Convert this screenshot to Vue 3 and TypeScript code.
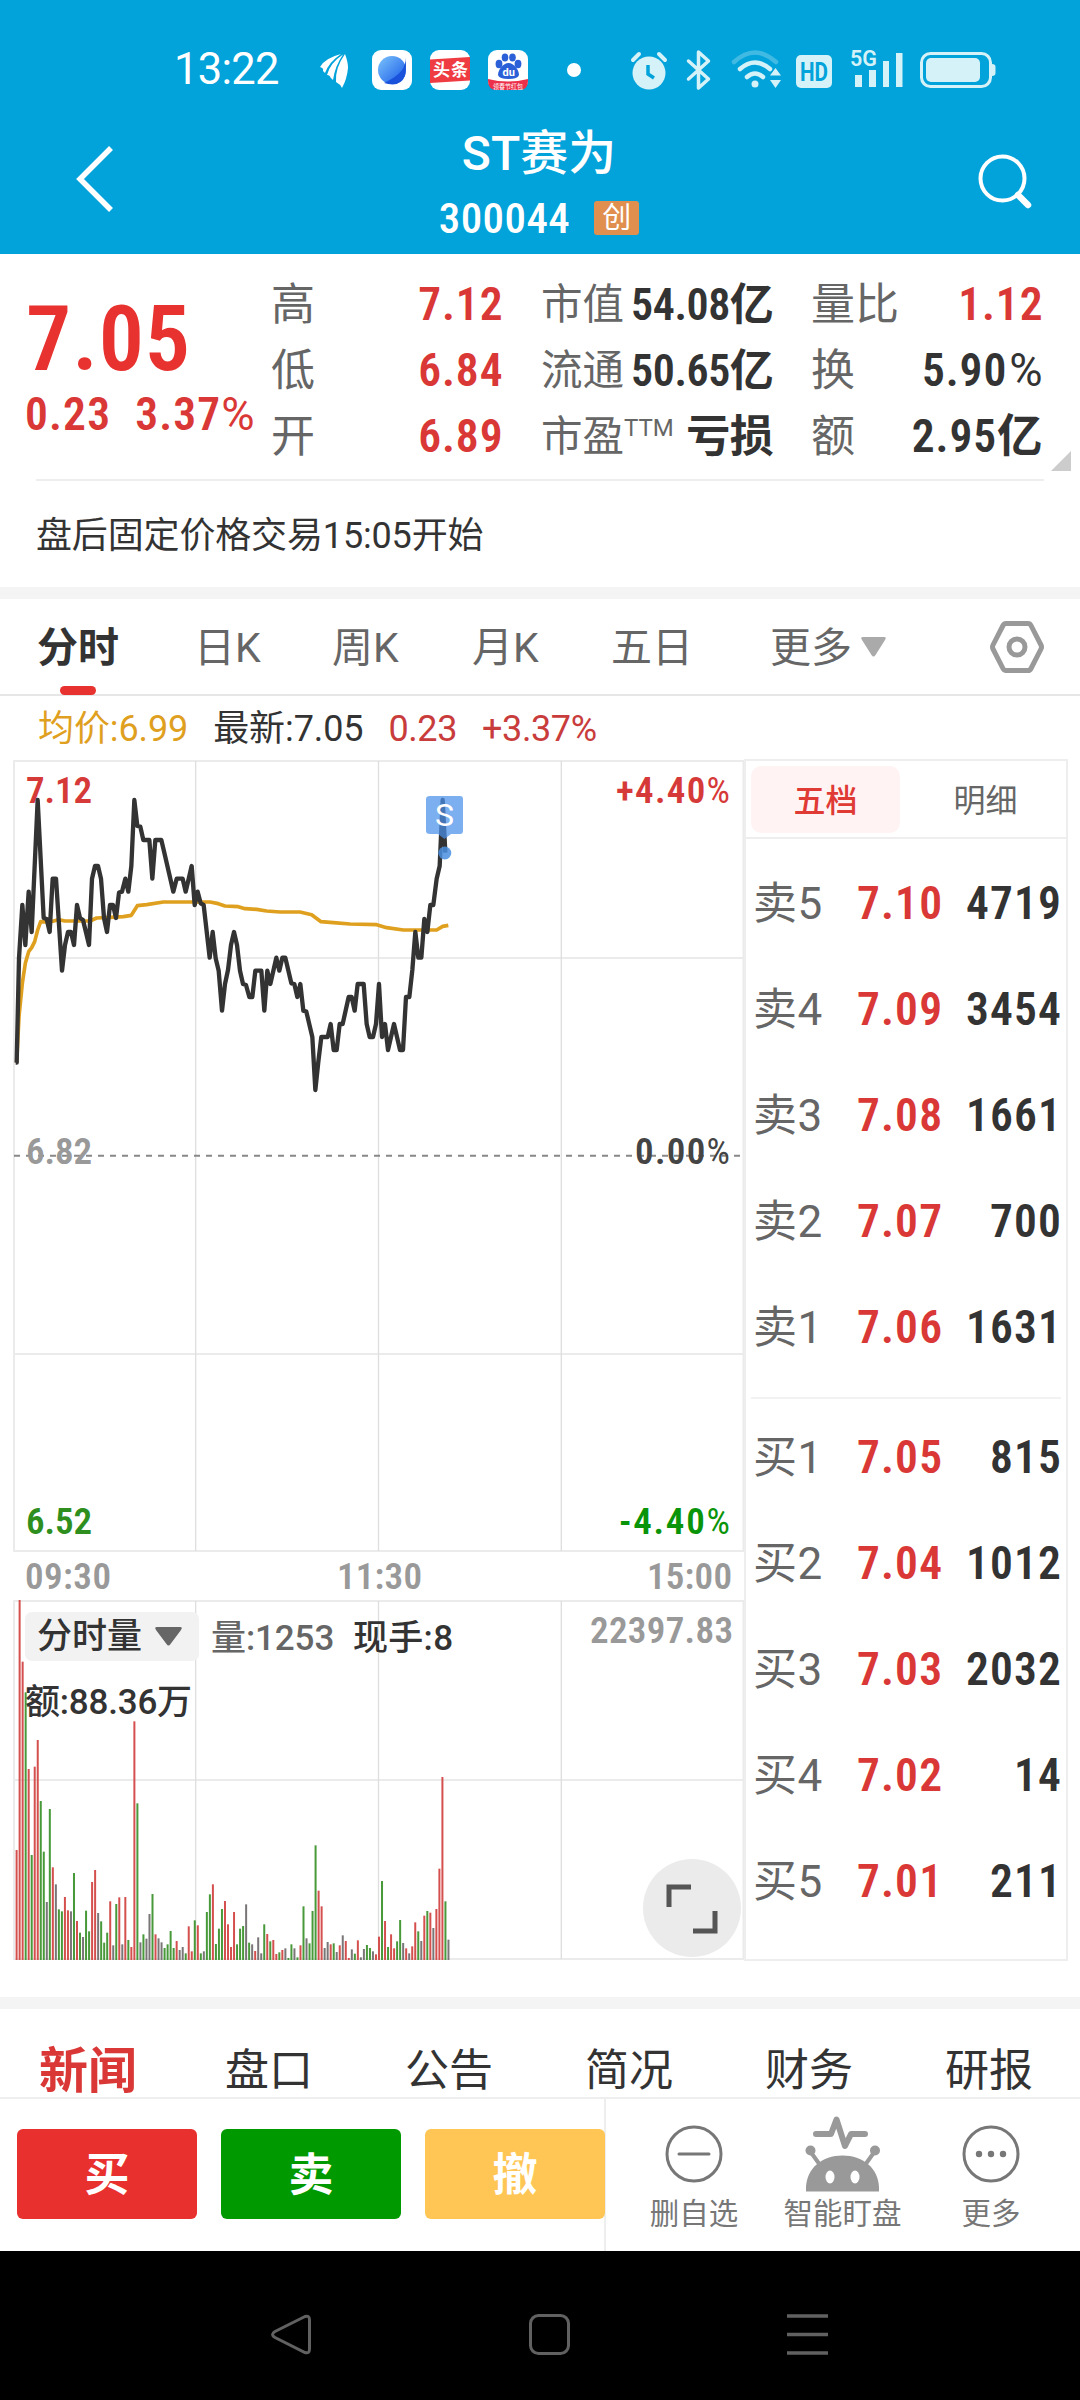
<script setup lang="ts">
interface Stat { label: string; sup?: string; value: string; red?: boolean; tight?: boolean }
interface Quote { name: string; price: string; volume: string }

const stats: Stat[][] = [
  [
    { label: '高', value: '7.12', red: true },
    { label: '低', value: '6.84', red: true },
    { label: '开', value: '6.89', red: true },
  ],
  [
    { label: '市值', value: '54.08亿', tight: true },
    { label: '流通', value: '50.65亿', tight: true },
    { label: '市盈', sup: 'TTM', value: '亏损', tight: true },
  ],
  [
    { label: '量比', value: '1.12', red: true },
    { label: '换', value: '5.90%' },
    { label: '额', value: '2.95亿' },
  ],
]

const periods = [
  { t: '分时', w: 80, ml: 37 }, { t: '日K', w: 62, ml: 77 }, { t: '周K', w: 66, ml: 76 },
  { t: '月K', w: 66, ml: 74 }, { t: '五日', w: 80, ml: 73 }, { t: '更多', w: 80, ml: 79 },
]

const sells: Quote[] = [
  { name: '卖5', price: '7.10', volume: '4719' },
  { name: '卖4', price: '7.09', volume: '3454' },
  { name: '卖3', price: '7.08', volume: '1661' },
  { name: '卖2', price: '7.07', volume: '700' },
  { name: '卖1', price: '7.06', volume: '1631' },
]
const buys: Quote[] = [
  { name: '买1', price: '7.05', volume: '815' },
  { name: '买2', price: '7.04', volume: '1012' },
  { name: '买3', price: '7.03', volume: '2032' },
  { name: '买4', price: '7.02', volume: '14' },
  { name: '买5', price: '7.01', volume: '211' },
]

const pages = ['新闻', '盘口', '公告', '简况', '财务', '研报']

// Minute price line and average line, in thirds of a pixel
const priceLine =
  '47,938 50,938 57,625 67,465 76,585 86,425 95,546 113,150 131,504 140,507 149,546 158,386 168,386 186,662 195,585 204,546 213,546 222,585 231,465 240,504 249,510 267,585 276,386 285,348 294,348 303,386 312,504 321,546 330,465 339,465 348,504 357,428 366,425 376,386 385,425 394,348 403,150 412,228 421,230 430,270 448,270 457,386 466,270 484,270 493,308 520,425 530,386 548,386 557,425 575,348 584,465 593,425 602,460 611,465 629,623 638,546 647,625 656,662 666,782 675,702 684,660 693,585 702,546 711,585 720,662 729,702 738,705 748,741 757,741 766,662 784,662 793,782 802,662 811,702 829,623 838,662 847,623 856,623 874,700 883,702 892,741 901,702 910,782 919,785 937,861 946,1020 955,935 964,861 983,861 992,822 1001,900 1010,900 1019,822 1028,822 1046,741 1055,741 1064,782 1073,702 1091,702 1100,822 1109,861 1119,861 1128,822 1137,702 1146,861 1155,822 1164,900 1182,822 1200,900 1209,900 1218,741 1228,741 1237,660 1246,546 1255,623 1264,623 1273,507 1282,546 1291,465 1300,465 1310,386 1319,348 1328,150 1336,308'
const averageLine =
  '50,938 57,800 67,700 76,640 86,605 95,593 104,575 113,540 122,515 150,516 175,509 195,513 270,513 290,504 330,502 370,500 394,496 412,467 440,464 490,456 580,456 630,456 655,461 675,468 715,470 735,476 770,478 800,483 840,486 900,486 935,494 963,515 1000,518 1050,522 1130,524 1160,533 1210,540 1310,540 1328,529 1345,526'

const rawBars =
  '780r 30r 215r 307g 537r 795g 530r 450r 633g 785g 936k 657g 832r 883k 958g 964g 921r 961r 964k 849g 993r 1028g 1041k 962g 1024g 876r 840r 969k 994g 1058g 1028g 934r 1066k 942g 922r 1063k 921r 1050g 1071r 394r 640g 1057k 1033g 1046k 972k 912g 1033r 1045k 1057k 1074g 1063g 1023g 1074g 1053r 1080k 1071k 1090g 1009r 1084r 991g 1006r 1090g 1084k 966g 913g 883r 1062g 1016g 957g 933r 1003r 1071r 966r 1063g 1016g 1008g 943k 1058g 1063k 1083r 1042k 1090k 1003g 1032r 1054g 1050r 1092r 1087g 1080r 1075k 1104g 1063g 1075k 1102g 1066r 949g 1045k 1060g 963g 766g 902r 949r 1074k 1056k 1063r 1060g 1086k 1066r 1036k 1053r 1104r 1078k 1091g 1051r 1102k 1077k 1065g 1074g 1084k 1093r 1040r 873g 993r 1071g 1033r 1075r 1054g 990g 1059k 1075r 1090k 1069r 997r 1024g 1053k 977r 963g 968r 1014k 957r 836r 561r 934g 1049k'
const tones: Record<string, string> = { r: '#d4504e', g: '#48993a', k: '#7a7678' }
const bars = rawBars.split(' ').map((s, i) => {
  const top = 1590 + parseInt(s, 10) / 3
  return { x: 15.6 + i * 3.02, y: top, h: 1960 - top, fill: tones[s.slice(-1)] }
})
</script>

<template>
  <div class="app">
    <header class="top">
      <div class="status">
        <span class="clock">13:22</span>
        <svg class="status-icons" width="690" height="50" viewBox="310 45 690 50">
          <g fill="#fff">
            <path d="M320 67Q325 58 341 54Q329 62 325 73L323 71Q324 68 320 67Z" />
            <path d="M327 75Q330 63 343 54.500Q335 66 333 80L330.500 77.500Q330 75 327 75Z" />
            <path d="M336 82Q335 68 345 54Q348 62 348 68Q347 79 342 88Q340 84 336 82Z" />
          </g>
          <defs>
            <linearGradient id="orb" x1="0" y1="0" x2="1" y2="1">
              <stop offset="0" stop-color="#7cc4fb" /><stop offset="1" stop-color="#1657e8" />
            </linearGradient>
          </defs>
          <rect x="372" y="50" width="40" height="40" rx="9" fill="#fff" />
          <circle cx="392" cy="70" r="14" fill="url(#orb)" />
          <path d="M405 57Q408 72 384 83Q400 88 405 76Q407 66 405 57Z" fill="#1a52dc" />
          <rect x="430" y="50" width="40" height="40" rx="9" fill="#fff" />
          <path d="M430 59.500L470 57V80.500L430 83Z" fill="#ef3b42" />
          <text x="433" y="76" font-size="17" font-weight="700" fill="#fff" textLength="35">头条</text>
          <rect x="488" y="50" width="40" height="40" rx="9" fill="#fff" />
          <g fill="#2a5fd8">
            <ellipse cx="499" cy="64" rx="3.400" ry="4.200" /><ellipse cx="505" cy="57.500" rx="3.300" ry="4" />
            <ellipse cx="512.500" cy="57.500" rx="3.300" ry="4" /><ellipse cx="518" cy="64" rx="3.400" ry="4.200" />
            <path d="M508.500 63C503 63 498 70 498 75Q499 79 508.500 79Q518 79 519 75C519 70 514 63 508.500 63Z" />
          </g>
          <path d="M488 79Q508 84 528 79V81Q528 90 519 90H497Q488 90 488 81Z" fill="#ec3049" />
          <text x="502.500" y="76" font-size="11" font-weight="700" fill="#fff">du</text>
          <text x="493" y="88.500" font-size="7" fill="#fff" textLength="30" lengthAdjust="spacingAndGlyphs">领春节红包</text>
          <circle cx="574" cy="70" r="7" fill="#fff" />

          <g fill="#d5f2f8">
            <circle cx="649" cy="73" r="16.500" />
            <path d="M633 60L639 54M665 60L659 54" stroke="#d5f2f8" stroke-width="4" stroke-linecap="round" />
            <path d="M648 65V74L654 78" fill="none" stroke="#02a2da" stroke-width="3.500" />
            <path d="M688.500 61L708.500 79L698.500 88V52L708.500 61L688.500 79" fill="none" stroke="#d5f2f8" stroke-width="3.500" stroke-linejoin="round" stroke-linecap="round" />
            <g fill="none" stroke="#d5f2f8" stroke-linecap="round" stroke-width="4.500">
              <path d="M734 62Q755 43 776 62" opacity=".3" /><path d="M740 69Q755 56 770 69" /><path d="M747 77Q755 70 763 77" />
            </g>
            <circle cx="755" cy="84" r="3.500" />
            <path d="M770 75.500L775.500 68L781 75.500ZM770 80L775.500 88L781 80Z" />
            <rect x="796" y="55" width="36" height="33" rx="5" />
            <text x="800" y="81" font-size="26" font-weight="700" fill="#02a2da" textLength="28" lengthAdjust="spacingAndGlyphs">HD</text>
            <text x="850" y="66" font-size="22" font-weight="600" textLength="27" lengthAdjust="spacingAndGlyphs">5G</text>
            <path d="M855 75h7v12h-7zM869 70h7v17h-7zM883 61h6v26h-6zM896 53h6.500v34h-6.500z" />
            <rect x="921.500" y="53.500" width="69" height="33" rx="9" fill="none" stroke="#d5f2f8" stroke-width="3" />
            <rect x="926" y="58" width="54" height="24" rx="5" />
            <path d="M992 64Q995.500 64 995.500 67V73Q995.500 76 992 76Z" />
          </g>
        </svg>
      </div>
      <div class="title-row">
        <svg width="50" height="76" viewBox="70 145 50 76" class="back">
          <path d="M111 150L80 181L111 212" fill="none" stroke="#fff" stroke-width="5.500" />
        </svg>
        <div class="titles">
          <h1>ST赛为</h1>
          <div class="code"><span class="code-num">300044</span><span class="badge">创</span></div>
        </div>
        <svg width="60" height="60" viewBox="975 153 60 60" class="search">
          <circle cx="1002.500" cy="179.500" r="22" fill="none" stroke="#fff" stroke-width="4" />
          <path d="M1018 196L1028 206" stroke="#fff" stroke-width="6.500" stroke-linecap="round" />
        </svg>
      </div>
    </header>

    <section class="summary">
      <div class="price-box">
        <div class="din big">7.05</div>
        <div class="din change"><span>0.23</span><span>3.37<i>%</i></span></div>
      </div>
      <div v-for="(col, c) in stats" :key="c" class="col">
        <div v-for="s in col" :key="s.label" class="stat" :class="'c' + c">
          <span class="lab">{{ s.label }}<sup v-if="s.sup">{{ s.sup }}</sup></span>
          <span class="din val" :class="{ red: s.red, tight: s.tight }">{{ s.value.replace('%', '') }}<i v-if="s.value.includes('%')">%</i></span>
        </div>
      </div>
      <svg class="corner" width="20" height="20"><path d="M20 0V20H0Z" fill="#ccc" /></svg>
    </section>
    <div class="notice">盘后固定价格交易15:05开始</div>
    <div class="band"></div>

    <nav class="periods">
      <span v-for="(p, i) in periods" :key="p.t" :class="{ on: i === 0 }" :style="{ width: p.w + 'px', marginLeft: p.ml + 'px' }">{{ p.t }}</span>
      <svg class="down" width="25" height="20"><path d="M2 0H23Q26 0 24 3L14.500 18Q12.500 21 10.500 18L1 3Q-1 0 2 0Z" fill="#aaa" /></svg>
      <svg class="hex" width="56" height="54" viewBox="0 0 56 54">
        <path d="M17 3.500H39Q41 3.500 42 5.500L52 25Q53 27 52 29L42 48.500Q41 50.500 39 50.500H17Q15 50.500 14 48.500L4 29Q3 27 4 25L14 5.500Q15 3.500 17 3.500Z" fill="none" stroke="#999" stroke-width="5" />
        <circle cx="28" cy="27" r="8" fill="none" stroke="#999" stroke-width="5" />
      </svg>
    </nav>
    <div class="info">
      <span class="gold">均价:6.99</span><span>最新:7.05</span><span class="dr">0.23</span><span class="dr">+3.37%</span>
    </div>

    <main class="market">
      <div class="charts">
        <svg width="744" height="1202" viewBox="0 759 744 1202">
          <g fill="none" stroke="#ebebeb" stroke-width="2">
            <path d="M14 761H743.500V1551H14ZM14 958H743M14 1354H743" />
            <path d="M14 1601H743.500V1959H14ZM14 1780H743" />
            <path d="M195.700 761V1551M378.500 761V1551M561.300 761V1551M195.700 1601V1959M378.500 1601V1959M561.300 1601V1959" stroke="#dedede" stroke-width="1.300" />
          </g>
          <path d="M14 1155.700H743" stroke="#888" stroke-width="2" stroke-dasharray="6 6" />
          <g class="axis">
            <text x="26" y="803" fill="#d63a38" textLength="66">7.12</text>
            <text x="616" y="803" fill="#d63a38" textLength="114">+4.40<tspan font-weight="400">%</tspan></text>
            <text x="26" y="1164" fill="#999" textLength="66">6.82</text>
            <text x="635" y="1164" fill="#444" textLength="95">0.00<tspan font-weight="400">%</tspan></text>
            <text x="26" y="1534" fill="#2e8f1e" textLength="66">6.52</text>
            <text x="619" y="1534" fill="#0a940a" textLength="111">-4.40<tspan font-weight="400">%</tspan></text>
            <text x="25" y="1589" fill="#999" textLength="86">09:30</text>
            <text x="337" y="1589" fill="#999" textLength="85">11:30</text>
            <text x="647" y="1589" fill="#999" textLength="85">15:00</text>
            <text x="590" y="1643" fill="#999" textLength="143">22397.83</text>
          </g>
          <g transform="translate(0 750) scale(.33333)" fill="none" stroke-linejoin="round">
            <polyline :points="averageLine" stroke="#dfa01f" stroke-width="11" />
            <polyline :points="priceLine" stroke="#333" stroke-width="13" />
          </g>
          <rect v-for="(b, i) in bars" :key="i" :x="b.x" :y="b.y" width="2" :height="b.h" :fill="b.fill" />
          <g>
            <path d="M430 796H460Q463 796 463 799V831Q463 834 460 834H451L444.500 839L438 834H430Q426 834 426 831V799Q426 796 430 796Z" fill="#4a90ea" opacity=".72" />
            <text x="435" y="826" font-size="32" fill="#fff" textLength="19" lengthAdjust="spacingAndGlyphs">S</text>
            <circle cx="444.800" cy="853" r="6.500" fill="#4a8fe0" opacity=".85" />
          </g>
        </svg>
        <div class="vol-head">
          <span class="pick">分时量<svg width="27" height="19"><path d="M2 0H25Q28 0 26 3L15.500 17Q13.500 20 11.500 17L1 3Q-1 0 2 0Z" fill="#666" /></svg></span>
          <span class="v1">量:1253</span><span class="v2">现手:8</span>
        </div>
        <div class="vol-sum">额:88.36万</div>
        <div class="expand">
          <svg width="52" height="50" viewBox="0 0 52 50" fill="none" stroke="#555" stroke-width="5"><path d="M3 23V3H25M27 47H49V27" /></svg>
        </div>
      </div>

      <aside class="book">
        <div class="book-tabs"><span class="on">五档</span><span>明细</span></div>
        <div class="quotes sell">
          <div v-for="q in sells" :key="q.name" class="quote"><span>{{ q.name }}</span><b class="din">{{ q.price }}</b><em class="din">{{ q.volume }}</em></div>
        </div>
        <div class="quotes buy">
          <div v-for="q in buys" :key="q.name" class="quote"><span>{{ q.name }}</span><b class="din">{{ q.price }}</b><em class="din">{{ q.volume }}</em></div>
        </div>
      </aside>
    </main>
    <div class="band low"></div>

    <nav class="pages"><span v-for="(p, i) in pages" :key="p" :class="{ on: i === 0 }">{{ p }}</span></nav>
    <footer class="trade">
      <div class="buttons"><button class="buy-btn">买</button><button class="sell-btn">卖</button><button class="undo-btn">撤</button></div>
      <div class="actions">
        <div class="act a1">
          <svg width="76" height="76" viewBox="0 0 76 76" fill="none" stroke="#777" stroke-width="3"><circle cx="38" cy="38" r="27" /><path d="M23 38H53" stroke-linecap="round" /></svg>
          <span>删自选</span>
        </div>
        <div class="act a2">
          <svg width="76" height="76" viewBox="0 0 76 76">
            <path d="M11 18H26L31.500 3.500L40 30L46 18H60" fill="none" stroke="#999" stroke-width="6" stroke-linecap="round" stroke-linejoin="round" />
            <path d="M5 35L15 49M70 35L60 49" stroke="#999" stroke-width="4" />
            <circle cx="5.500" cy="34.500" r="5" fill="#999" /><circle cx="70" cy="34.500" r="5" fill="#999" />
            <path d="M1 75.500V71C2 52 17 39.500 37.500 39.500S73 52 74 71V75.500Z" fill="#999" />
            <ellipse cx="25" cy="61" rx="4.500" ry="6.500" fill="#fff" /><ellipse cx="50" cy="61" rx="4.500" ry="6.500" fill="#fff" />
          </svg>
          <span>智能盯盘</span>
        </div>
        <div class="act a3">
          <svg width="76" height="76" viewBox="0 0 76 76"><circle cx="38" cy="38" r="27" fill="none" stroke="#777" stroke-width="3" /><g fill="#777"><circle cx="26" cy="38" r="3.200" /><circle cx="38" cy="38" r="3.200" /><circle cx="50" cy="38" r="3.200" /></g></svg>
          <span>更多</span>
        </div>
      </div>
    </footer>
    <div class="sysnav">
      <svg width="1080" height="149" viewBox="0 2251 1080 149" fill="none" stroke="#616161" stroke-width="3">
        <path d="M305 2316.500L275 2331.500Q270 2334.500 275 2337.500L305 2352.500Q309.500 2354 309.500 2349V2320Q309.500 2315 305 2316.500Z" />
        <rect x="530.500" y="2315.500" width="38" height="38" rx="8" />
        <path d="M787 2316H828M787 2334.500H828M787 2353H828" stroke-width="3.500" />
      </svg>
    </div>
  </div>
</template>

<style>
body { margin: 0; background: #fff; }
</style>

<style scoped>
.app { width: 1080px; height: 2400px; overflow: hidden; background: #fff; color: #333; font-family: Roboto, "Noto Sans CJK SC", sans-serif; display: flex; flex-direction: column; }
.app > * { flex: none; }
* { box-sizing: border-box; }
span { white-space: nowrap; }
svg { display: block; flex: none; }
i, em { font-style: normal; }
.din { font-stretch: 83%; font-weight: 600; letter-spacing: .025em; white-space: nowrap; }
.din i { font-weight: 400; font-stretch: 95%; margin-left: 2px; }

.top { height: 254px; background: #02a2da; color: #fff; }
.status { height: 95px; padding: 45px 0 0 174px; display: flex; }
.clock { width: 136px; font-size: 43.500px; line-height: 50px; letter-spacing: -.7px; }
.title-row { height: 159px; display: flex; }
.back { margin: 48px 0 0 70px; }
.titles { width: 740px; margin-left: 49px; display: flex; flex-direction: column; align-items: center; }
h1 { margin: 35px 0 0; font-size: 48px; line-height: 48px; font-weight: 500; }
.code { display: flex; margin-top: 22px; height: 36px; align-items: center; }
.code-num { font-size: 43px; line-height: 36px; font-stretch: 85%; font-weight: 500; letter-spacing: .4px; }
.badge { width: 45px; height: 34px; margin-left: 24px; border-radius: 3px; background: #e08f4e; font-size: 29px; line-height: 34px; text-align: center; }
.search { margin: 57px 0 0 66px; }

.summary { height: 227px; margin-right: 36px; margin-left: 26px; display: flex; position: relative; padding-top: 18px; }
.summary::after { content: ""; position: absolute; left: 10px; right: 0; bottom: 0; height: 2px; background: #eee; }
.price-box { width: 245px; color: #e8322f; }
.big { font-size: 90px; line-height: 100px; margin-top: 18px; letter-spacing: .01em; }
.change { height: 50px; font-size: 45.500px; line-height: 50px; color: #d93836; display: flex; gap: 24px; margin-left: -1px; }
.change i { margin-left: 0; font-stretch: 90%; }
.col { width: 232px; margin-right: 38px; }
.col:last-of-type { margin-right: 0; }
.stat { height: 66px; line-height: 66px; display: flex; justify-content: space-between; }
.lab { font-size: 44px; color: #666; }
.c1 .lab { font-size: 41.500px; }
.lab sup { font-size: 24px; vertical-align: 15px; line-height: 0; }
.val { font-size: 45.500px; letter-spacing: .02em; margin-right: -.01em; }
.val.tight { letter-spacing: -.01em; font-size: 44px; }
.red { color: #d93836; }
.corner { position: absolute; right: -27px; bottom: 10px; }
.notice { height: 106px; padding-left: 36px; font-size: 36px; line-height: 111px; letter-spacing: -.15px; }
.band { height: 12px; background: #f4f4f4; }

.periods { height: 97px; border-bottom: 2px solid #e6e6e6; display: flex; align-items: center; font-size: 41px; color: #666; }
.periods span { height: 95px; line-height: 99px; position: relative; }
.periods .on { color: #333; font-weight: 700; }
.periods .on::after { content: ""; position: absolute; left: 23px; bottom: -1px; width: 36px; height: 9px; border-radius: 5px; background: #e8322f; }
.down { margin-left: 11px; }
.hex { margin-left: 103px; }
.info { height: 63px; padding-left: 38px; display: flex; gap: 25px; font-size: 36px; line-height: 67px; letter-spacing: -.1px; }
.gold { color: #dfa01f; }
.dr { color: #c93c3c; letter-spacing: -.4px; }

.market { display: flex; height: 1202px; }
.charts { width: 744px; position: relative; }
.axis text { font-family: Roboto; font-size: 37px; font-weight: 600; font-stretch: 85%; }
.vol-head { position: absolute; left: 25px; top: 853px; display: flex; font-size: 35px; line-height: 53px; }
.pick { display: flex; align-items: center; width: 174px; height: 49px; padding-left: 12px; gap: 13px; border-radius: 7px; background: #f2f2f2; font-weight: 500; }
.v1 { margin-left: 12px; width: 142px; color: #666; font-weight: 500; letter-spacing: -.1px; }
.v2 { font-weight: 500; letter-spacing: .3px; }
.vol-sum { position: absolute; left: 25px; top: 919px; font-size: 35px; line-height: 50px; font-weight: 500; letter-spacing: -.2px; }
.expand { position: absolute; left: 643px; top: 1100px; width: 98px; height: 98px; border-radius: 50%; background: #ebebeb; display: flex; align-items: center; justify-content: center; padding-top: 1px; }

.book { width: 324px; border: 2px solid #eee; }
.book-tabs { height: 78px; border-bottom: 2px solid #eee; display: flex; padding: 5px; font-size: 32px; color: #666; }
.book-tabs span { width: 149px; line-height: 71px; height: 67px; text-align: center; border-radius: 10px; }
.book-tabs span + span { margin-left: 11px; }
.book-tabs .on { background: #fff4f3; color: #e03a35; font-weight: 500; }
.quotes { margin: 0 5px; }
.sell { padding: 12px 0 16px; border-bottom: 2px solid #f2f2f2; }
.buy { padding-top: 6px; }
.quote { height: 106px; line-height: 106px; display: flex; align-items: center; font-size: 44px; color: #666; padding-left: 2px; }
.quote span { width: 104px; letter-spacing: .4px; }
.quote b { font-size: 45.500px; color: #d93836; }
.quote em { font-size: 45.500px; color: #333; flex: 1; text-align: right; margin-right: -1px; }
.low { margin-top: 36px; }

.pages { height: 90px; display: flex; border-bottom: 2px solid #eee; padding-left: 39px; font-size: 44px; line-height: 125px; overflow: hidden; }
.pages span { flex: none; width: 180px; padding-left: 6px; }
.pages .on { font-size: 49px; font-weight: 700; color: #d93836; padding: 0; }
.trade { height: 152px; display: flex; }
.buttons { width: 606px; padding: 30px 0 0 17px; display: flex; gap: 24px; border-right: 2px solid #eee; }
button { width: 180px; height: 90px; border: 0; border-radius: 6px; padding: 4px 0 0; font: 700 45px/86px Roboto, "Noto Sans CJK SC", sans-serif; color: #fff; flex: none; }
.buy-btn { background: #e8302f; }
.sell-btn { background: #009900; }
.undo-btn { background: #ffc656; }
.actions { display: flex; }
.act { display: flex; flex-direction: column; align-items: center; font-size: 29.500px; line-height: 36px; color: #777; padding-top: 17px; }
.act span { margin-top: 4px; }
.a1 { width: 176px; }
.a2 { width: 121px; }
.a3 { width: 176px; }
.sysnav { height: 149px; background: #000; }
</style>
